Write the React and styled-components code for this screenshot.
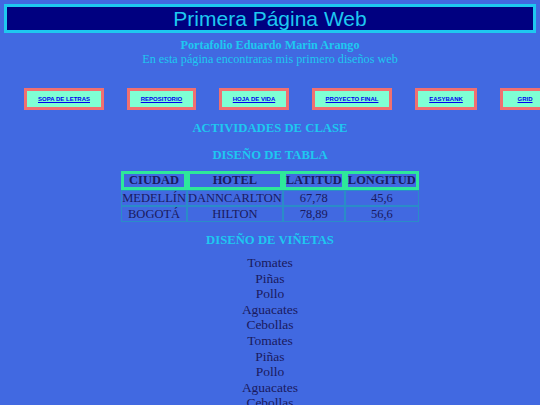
import React from "react";
import styled, { createGlobalStyle } from "styled-components";

const Global = createGlobalStyle`
  html, body { margin: 0; padding: 0; background: #4169e1; overflow: hidden; }
  body { font-family: "Liberation Serif", "Times New Roman", serif; }
`;

const Page = styled.div`
  padding: 4px 4px 0 4px;
  display: flex;
  flex-direction: column;
  align-items: stretch;
`;

const Header = styled.h1`
  margin: 0;
  background: #000080;
  border: 3px solid #1ec8f0;
  color: #1ec8f0;
  font-family: "Liberation Sans", Arial, sans-serif;
  font-weight: normal;
  font-size: 21px;
  line-height: 23px;
  text-align: center;
`;

const Intro = styled.div`
  margin-top: 5px;
  text-align: center;
  color: #1ec8f0;
  font-size: 12.2px;
  line-height: 14px;
`;

const Strong = styled.div`
  font-weight: bold;
`;

const Nav = styled.nav`
  display: flex;
  flex-wrap: nowrap;
  gap: 23px;
  margin-top: 22px;
  padding-left: 20px;
  white-space: nowrap;
`;

const NavButton = styled.a`
  flex: none;
  box-sizing: border-box;
  height: 22px;
  width: ${(p) => p.$w}px;
  display: flex;
  align-items: center;
  justify-content: center;
  background: #7fffd4;
  border: 3px solid #f07070;
  color: #0000ee;
  font-family: "Liberation Sans", Arial, sans-serif;
  font-weight: bold;
  font-size: 6px;
  text-decoration: underline;
`;

const SectionTitle = styled.h2`
  margin: ${(p) => p.$mt}px 0 0 0;
  text-align: center;
  color: #1ec8f0;
  font-size: 12.7px;
  line-height: 15px;
  font-weight: bold;
`;

const Table = styled.table`
  margin: 8px auto 0 auto;
  border-collapse: separate;
  border-spacing: 0;
  color: #1a1a5e;
  font-size: 12.5px;
`;

const Th = styled.th`
  border: 3px solid #2ee89a;
  padding: 0;
  height: 19px;
  box-sizing: border-box;
  line-height: 13px;
  font-weight: bold;
`;

const Td = styled.td`
  border: 1px solid #2a8cc8;
  padding: 0;
  height: 16px;
  box-sizing: border-box;
  line-height: 14px;
  text-align: center;
`;

const List = styled.ul`
  list-style: none;
  margin: 7px 0 0 0;
  padding: 0;
  text-align: center;
  color: #1a1a5e;
  font-size: 13.5px;
  line-height: 15.6px;
`;

const nav = [
  ["SOPA DE LETRAS", 80],
  ["REPOSITORIO", 69],
  ["HOJA DE VIDA", 70],
  ["PROYECTO FINAL", 80],
  ["EASYBANK", 62],
  ["GRID", 50],
];

const rows = [
  ["MEDELLÍN", "DANNCARLTON", "67,78", "45,6"],
  ["BOGOTÁ", "HILTON", "78,89", "56,6"],
];

const items = ["Tomates", "Piñas", "Pollo", "Aguacates", "Cebollas", "Tomates", "Piñas", "Pollo", "Aguacates", "Cebollas"];

export default function App() {
  return (
    <>
      <Global />
      <Page>
        <Header>Primera Página Web</Header>
        <Intro>
          <Strong>Portafolio Eduardo Marin Arango</Strong>
          <div>En esta página encontraras mis primero diseños web</div>
        </Intro>
        <Nav>
          {nav.map(([t, w]) => (
            <NavButton key={t} href="#" $w={w}>{t}</NavButton>
          ))}
        </Nav>
        <SectionTitle $mt={11}>ACTIVIDADES DE CLASE</SectionTitle>
        <SectionTitle $mt={12}>DISEÑO DE TABLA</SectionTitle>
        <Table>
          <thead>
            <tr>
              <Th>CIUDAD</Th>
              <Th>HOTEL</Th>
              <Th>LATITUD</Th>
              <Th>LONGITUD</Th>
            </tr>
          </thead>
          <tbody>
            {rows.map((r) => (
              <tr key={r[0]}>
                {r.map((c, i) => (
                  <Td key={i}>{c}</Td>
                ))}
              </tr>
            ))}
          </tbody>
        </Table>
        <SectionTitle $mt={11}>DISEÑO DE VIÑETAS</SectionTitle>
        <List>
          {items.map((t, i) => (
            <li key={i}>{t}</li>
          ))}
        </List>
      </Page>
    </>
  );
}
